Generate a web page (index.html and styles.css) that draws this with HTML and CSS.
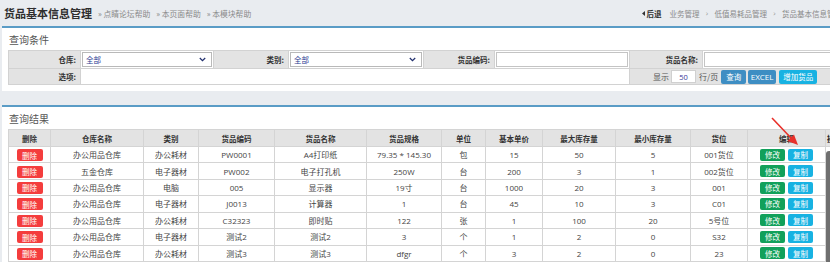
FILE: index.html
```html
<!DOCTYPE html>
<html lang="zh-CN">
<head>
<meta charset="utf-8">
<title>货品基本信息管理</title>
<link rel="stylesheet" href="styles.css">
</head>
<body>
<div class="page">
  <header class="topbar">
    <h1 class="title">货品基本信息管理</h1>
    <div class="helps">
      <a>» 点睛论坛帮助</a>
      <a>» 本页面帮助</a>
      <a>» 本模块帮助</a>
    </div>
    <nav class="crumbs">
      <span class="back"><svg class="tri" width="3" height="5" viewBox="0 0 3 5"><path d="M3 0 L0 2.5 L3 5 Z" fill="#333"/></svg>后退</span>
      <span>业务管理</span><span class="sep">›</span>
      <span>低值易耗品管理</span><span class="sep">›</span>
      <span>货品基本信息管理</span>
    </nav>
  </header>

  <section class="panel">
    <div class="panel-head"><span class="panel-title">查询条件</span></div>
    <table class="form">
      <colgroup>
        <col class="c72"><col class="c133"><col class="c75"><col class="c135"><col class="c71"><col class="c135"><col class="c73"><col class="c136">
      </colgroup>
      <tr class="frow1">
        <td class="lbl">仓库:</td>
        <td class="fld"><div class="select"><span>全部</span><svg width="7" height="5" viewBox="0 0 7 5"><path d="M0.8 1 L3.5 3.6 L6.2 1" fill="none" stroke="#22306e" stroke-width="1.3"/></svg></div></td>
        <td class="lbl">类别:</td>
        <td class="fld"><div class="select"><span>全部</span><svg width="7" height="5" viewBox="0 0 7 5"><path d="M0.8 1 L3.5 3.6 L6.2 1" fill="none" stroke="#22306e" stroke-width="1.3"/></svg></div></td>
        <td class="lbl">货品编码:</td>
        <td class="fld"><div class="input"></div></td>
        <td class="lbl">货品名称:</td>
        <td class="fld"><div class="input"></div></td>
      </tr>
      <tr class="frow2">
        <td class="lbl">选项:</td>
        <td class="blank" colspan="5"></td>
        <td class="ctrls" colspan="2">
          <div class="ctrl-line">
            <span class="muted">显示</span>
            <span class="pagesize">50</span>
            <span class="muted">行/页</span>
            <span class="btn btn-steel b-query">查询</span>
            <span class="btn btn-steel b-excel">EXCEL</span>
            <span class="btn btn-cyan b-add">增加货品</span>
          </div>
        </td>
      </tr>
    </table>
  </section>

  <section class="panel results">
    <div class="panel-head">
      <span class="panel-title">查询结果</span>
      <span class="btn btn-steel b-batch">批量增加</span>
    </div>
    <table class="grid">
      <colgroup>
        <col class="g42"><col class="g93"><col class="g55"><col class="g76"><col class="g92"><col class="g75"><col class="g44"><col class="g57"><col class="g73"><col class="g75"><col class="g57"><col class="g78"><col class="g40">
      </colgroup>
      <thead>
        <tr>
          <th>删除</th><th>仓库名称</th><th>类别</th><th>货品编码</th><th>货品名称</th><th>货品规格</th><th>单位</th><th>基本单价</th><th>最大库存量</th><th>最小库存量</th><th>货位</th><th>编辑</th><th class="extra">操作</th>
        </tr>
      </thead>
      <tbody>
        <tr><td><span class="btn btn-red">删除</span></td><td>办公用品仓库</td><td>办公耗材</td><td>PW0001</td><td>A4打印纸</td><td>79.35 * 145.30</td><td>包</td><td>15</td><td>50</td><td>5</td><td>001货位</td><td class="edit"><span class="btn btn-green">修改</span><span class="btn btn-cyan">复制</span></td><td></td></tr>
        <tr><td><span class="btn btn-red">删除</span></td><td>五金仓库</td><td>电子器材</td><td>PW002</td><td>电子打孔机</td><td>250W</td><td>台</td><td>200</td><td>3</td><td>1</td><td>002货位</td><td class="edit"><span class="btn btn-green">修改</span><span class="btn btn-cyan">复制</span></td><td></td></tr>
        <tr><td><span class="btn btn-red">删除</span></td><td>办公用品仓库</td><td>电脑</td><td>005</td><td>显示器</td><td>19寸</td><td>台</td><td>1000</td><td>20</td><td>3</td><td>001</td><td class="edit"><span class="btn btn-green">修改</span><span class="btn btn-cyan">复制</span></td><td></td></tr>
        <tr><td><span class="btn btn-red">删除</span></td><td>办公用品仓库</td><td>电子器材</td><td>J0013</td><td>计算器</td><td>1</td><td>台</td><td>45</td><td>10</td><td>3</td><td>C01</td><td class="edit"><span class="btn btn-green">修改</span><span class="btn btn-cyan">复制</span></td><td></td></tr>
        <tr><td><span class="btn btn-red">删除</span></td><td>办公用品仓库</td><td>办公耗材</td><td>C32323</td><td>即时贴</td><td>122</td><td>张</td><td>1</td><td>100</td><td>20</td><td>5号位</td><td class="edit"><span class="btn btn-green">修改</span><span class="btn btn-cyan">复制</span></td><td></td></tr>
        <tr><td><span class="btn btn-red">删除</span></td><td>办公用品仓库</td><td>电子器材</td><td>测试2</td><td>测试2</td><td>3</td><td>个</td><td>1</td><td>2</td><td>0</td><td>S32</td><td class="edit"><span class="btn btn-green">修改</span><span class="btn btn-cyan">复制</span></td><td></td></tr>
        <tr><td><span class="btn btn-red">删除</span></td><td>办公用品仓库</td><td>办公耗材</td><td>测试3</td><td>测试3</td><td>dfgr</td><td>个</td><td>3</td><td>2</td><td>0</td><td>23</td><td class="edit"><span class="btn btn-green">修改</span><span class="btn btn-cyan">复制</span></td><td></td></tr>
        <tr><td><span class="btn btn-red">删除</span></td><td>办公用品仓库</td><td>办公耗材</td><td>测试4</td><td>测试4</td><td>4</td><td>个</td><td>5</td><td>2</td><td>0</td><td>24</td><td class="edit"><span class="btn btn-green">修改</span><span class="btn btn-cyan">复制</span></td><td></td></tr>
      </tbody>
    </table>
    <div class="scroll-thumb"></div>
  </section>

  <svg class="arrow" width="40" height="40" viewBox="0 0 40 40">
    <line x1="7" y1="6" x2="27" y2="27" stroke="#e8302a" stroke-width="1.6"/>
    <path d="M33 33 L22.5 29 L29 22.5 Z" fill="#e8302a"/>
  </svg>
</div>
</body>
</html>
```

FILE: styles.css
```css
html, body {
  margin: 0;
  padding: 0;
  overflow: hidden;
}
body {
  background: #e9ecf0;
  font-family: "Open Sans", "Noto Sans CJK SC", sans-serif;
  color: #444;
}
.page {
  width: 880px;
  position: relative;
}

/* Top bar */
.topbar {
  height: 26px;
  display: flex;
  align-items: center;
  padding-left: 4px;
}
.title {
  margin: 0;
  font-family: "Noto Sans CJK SC", sans-serif;
  font-size: 11px;
  font-weight: bold;
  color: #2e2e2e;
  line-height: 1;
}
.helps {
  display: flex;
  gap: 6px;
  margin-left: 6px;
  font-family: "Noto Sans CJK SC", sans-serif;
  font-size: 7.8px;
  color: #8a8a8a;
  padding-top: 1px;
}
.crumbs {
  margin-left: auto;
  display: flex;
  align-items: center;
  gap: 6px;
  font-family: "Noto Sans CJK SC", sans-serif;
  font-size: 7.5px;
  color: #8a8a8a;
  white-space: nowrap;
  margin-right: 38px;
}
.crumbs .back {
  color: #333;
  font-weight: bold;
  display: flex;
  align-items: center;
  gap: 2px;
  margin-right: 2px;
}
.crumbs .sep {
  color: #999;
  font-family: "DejaVu Sans", sans-serif;
}

/* Panels */
.panel {
  margin-left: 2px;
  background: #fff;
  border-top: 2px solid #5a9cc6;
  padding: 0 6px 6px 6px;
}
.results {
  margin-top: 14px;
  position: relative;
  padding-bottom: 0;
}
.panel-head {
  height: 22px;
  display: flex;
  align-items: center;
}
.panel-title {
  font-family: "Noto Sans CJK SC", sans-serif;
  font-size: 10px;
  color: #555;
  padding-left: 1px;
}

/* Form */
.form {
  border-collapse: collapse;
  table-layout: fixed;
  width: 830px;
  font-family: "Noto Sans CJK SC", sans-serif;
}
.c72 { width: 72px; }
.c133 { width: 133px; }
.c75 { width: 75px; }
.c135 { width: 135px; }
.c71 { width: 71px; }
.c73 { width: 73px; }
.c136 { width: 136px; }
.form td {
  border: 1px solid #d2d2d2;
  padding: 0;
}
.frow1 { height: 17px; }
.frow2 { height: 16px; }
.form .lbl {
  background: #e3e3e3;
  text-align: right;
  padding-right: 4px;
  font-size: 7.5px;
  font-weight: bold;
  color: #333;
}
.form .fld {
  padding: 1px;
}
.select {
  height: 13px;
  border: 1px solid #b9b9b9;
  display: flex;
  align-items: center;
  justify-content: space-between;
  padding: 0 5px 0 3px;
  font-size: 7.5px;
  color: #2b3a8f;
  background: #fff;
}
.input {
  height: 13px;
  border: 1px solid #c4c4c4;
  background: #fff;
}
.form .blank { background: #fff; }
.form .ctrls {
  background: #e3e3e3;
  padding-left: 23px;
}
.ctrl-line {
  display: flex;
  align-items: center;
  gap: 2px;
}
.muted {
  font-size: 8px;
  color: #555;
}
.pagesize {
  width: 25px;
  height: 13px;
  background: #fff;
  border: 1px solid #d0d0d0;
  box-sizing: border-box;
  font-family: "Open Sans", sans-serif;
  font-size: 7.5px;
  color: #3a3a9a;
  display: flex;
  align-items: center;
  justify-content: center;
  margin-right: 1px;
}

/* Buttons */
.btn {
  display: inline-flex;
  align-items: center;
  justify-content: center;
  color: #fff;
  font-family: "Noto Sans CJK SC", sans-serif;
  font-size: 7.5px;
  border-radius: 2px;
  box-sizing: border-box;
  white-space: nowrap;
}
.btn-steel { background: #3e8ec3; }
.btn-cyan { background: #17b2e2; }
.btn-green { background: #11a05a; }
.btn-red { background: #f43d3d; }
.b-query { width: 25px; height: 14px; margin-left: 1px; }
.b-excel { width: 28px; height: 14px; font-family: "Open Sans", sans-serif; font-size: 8px; }
.b-add { width: 38px; height: 14px; margin-left: 1px; }
.b-batch {
  margin-left: auto;
  margin-right: -45px;
  width: 80px;
  height: 14px;
  justify-content: flex-start;
  padding-left: 4px;
  font-size: 8px;
  margin-top: 4px;
}

/* Grid */
.grid {
  border-collapse: collapse;
  table-layout: fixed;
  width: 857px;
  font-size: 8px;
  color: #444;
}
.g42 { width: 42px; }
.g93 { width: 93px; }
.g55 { width: 55px; }
.g76 { width: 76px; }
.g92 { width: 92px; }
.g75 { width: 75px; }
.g44 { width: 44px; }
.g57 { width: 57px; }
.g73 { width: 73px; }
.g78 { width: 78px; }
.g40 { width: 40px; }
.grid th,
.grid td {
  border: 1px solid #d4d4d4;
  padding: 0;
  text-align: center;
  white-space: nowrap;
  overflow: hidden;
}
.grid thead tr { height: 17px; }
.grid th {
  background: #e3e3e3;
  font-family: "Noto Sans CJK SC", sans-serif;
  font-weight: bold;
  font-size: 7.5px;
  color: #333;
}
.grid th.extra {
  text-align: left;
  padding-left: 1px;
  color: #222;
}
.grid tbody tr { height: 16.43px; }
.grid td .btn {
  height: 12px;
  vertical-align: middle;
}
.grid td .btn-red { width: 26px; }
.grid td.edit {
  font-size: 0;
}
.grid td.edit .btn {
  width: 25px;
  font-size: 7.5px;
}
.grid td.edit .btn + .btn {
  margin-left: 3px;
}

.scroll-thumb {
  position: absolute;
  left: 824px;
  top: 44px;
  width: 8px;
  bottom: 0;
  background: #6f6f6f;
  border-radius: 3px 3px 0 0;
}

.arrow {
  position: absolute;
  left: 765px;
  top: 112px;
}
```
